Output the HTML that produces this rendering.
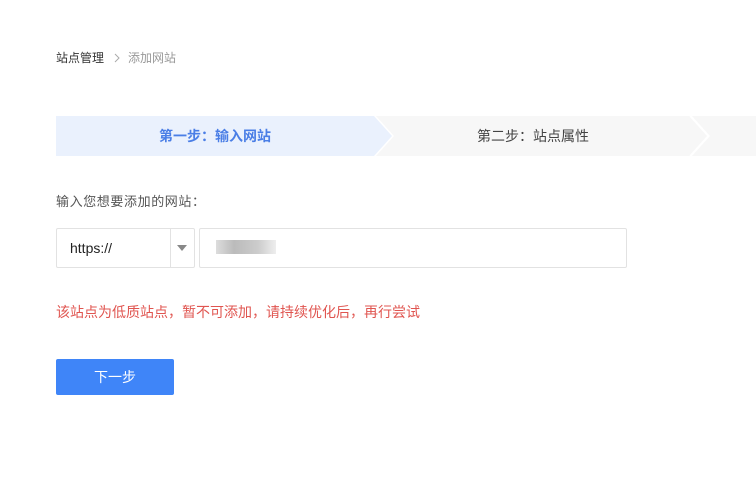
<!DOCTYPE html>
<html><head><meta charset="utf-8"><style>
body{margin:0;width:756px;height:501px;background:#fff;font-family:"Noto Sans CJK SC","Liberation Sans",sans-serif;position:relative;overflow:hidden}
.a{position:absolute;white-space:nowrap}
</style></head><body>
<div class="a" style="left:56px;top:49px;font-size:12px;color:#333">站点管理</div>
<svg class="a" style="left:113px;top:53px" width="8" height="10"><polyline points="2,1 6,5 2,9" fill="none" stroke="#aaa" stroke-width="1"/></svg>
<div class="a" style="left:128px;top:49px;font-size:12px;color:#999">添加网站</div>
<svg class="a" style="left:0;top:116px" width="756" height="40">
<polygon points="56,0 374,0 392,20 374,40 56,40" fill="#eaf1fd"/>
<polygon points="376,0 690,0 708,20 690,40 376,40 394,20" fill="#f7f7f7"/>
<polygon points="692,0 756,0 756,40 692,40 710,20" fill="#f7f7f7"/>
<polyline points="690,0 708,20 690,40" fill="none" stroke="#fff" stroke-width="1.5"/>
</svg>
<div class="a" style="left:159px;top:126px;font-size:14px;color:#4a7ee6;font-weight:bold">第一步：输入网站</div>
<div class="a" style="left:477px;top:126px;font-size:14px;color:#444">第二步：站点属性</div>
<div class="a" style="left:56px;top:191px;font-size:13px;letter-spacing:0.6px;color:#555">输入您想要添加的网站：</div>
<div class="a" style="left:56px;top:228px;width:137px;height:38px;border:1px solid #e2e2e2;border-radius:2px"></div>
<div class="a" style="left:170px;top:229px;width:1px;height:38px;background:#e2e2e2"></div>
<div class="a" style="left:70px;top:240px;font-size:14px;color:#222;font-family:'Liberation Sans',sans-serif">https://</div>
<div class="a" style="left:177px;top:245px;width:0;height:0;border-left:5px solid transparent;border-right:5px solid transparent;border-top:6px solid #888"></div>
<div class="a" style="left:199px;top:228px;width:426px;height:38px;border:1px solid #e2e2e2;border-radius:2px"></div>
<div class="a" style="left:216px;top:240px;width:60px;height:14px;background:linear-gradient(90deg,#ddd,#bbb 30%,#ccc 70%,#eee)"></div>
<div class="a" style="left:56px;top:302px;font-size:14px;color:#e05550">该站点为低质站点，暂不可添加，请持续优化后，再行尝试</div>
<div class="a" style="left:56px;top:359px;width:118px;height:36px;background:#3f85f8;border-radius:2px;color:#fff;font-size:14px;text-align:center;line-height:36px">下一步</div>
</body></html>
